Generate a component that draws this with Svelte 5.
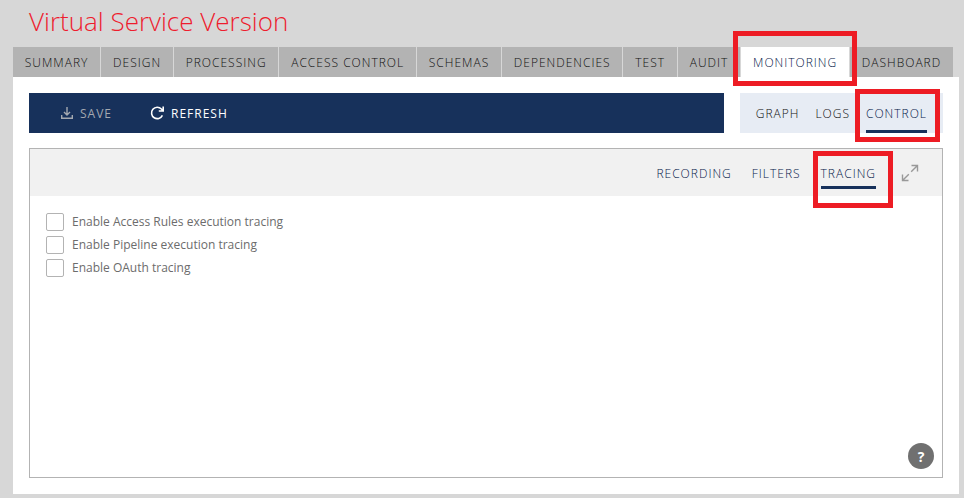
<script lang="ts">
	const tabs = [
		'Summary',
		'Design',
		'Processing',
		'Access Control',
		'Schemas',
		'Dependencies',
		'Test',
		'Audit',
		'Monitoring',
		'Dashboard'
	];
	const views = ['Graph', 'Logs', 'Control'];
	const sections = ['Recording', 'Filters', 'Tracing'];

	let tab = $state('Monitoring');
	let view = $state('Control');
	let section = $state('Tracing');

	let options = $state([
		{ id: 'access-rules', label: 'Enable Access Rules execution tracing', checked: false },
		{ id: 'pipeline', label: 'Enable Pipeline execution tracing', checked: false },
		{ id: 'oauth', label: 'Enable OAuth tracing', checked: false }
	]);
</script>

<div class="page">
	<h1>Virtual Service Version</h1>

	<nav class="tabs">
		{#each tabs as name}
			<button class="tab" class:active={tab === name} onclick={() => (tab = name)}>
				{name}
				{#if name === 'Monitoring'}<span class="callout"></span>{/if}
			</button>
		{/each}
	</nav>

	<main>
		<div class="bars">
			<div class="toolbar">
				<button class="action" disabled>
					<svg width="12" height="12" viewBox="0 0 12 12">
						<path d="M6 0v8M3 5l3 3 3-3M0.7 8v3.3h10.6V8" />
					</svg>
					Save
				</button>
				<button class="action">
					<svg class="refresh" width="14" height="14" viewBox="0 0 14 14">
						<path d="M12.4 9.4A5.7 5.7 0 1 1 11.4 3L13 4.8M13.2 0.4v4.6H8.8" />
					</svg>
					Refresh
				</button>
			</div>
			<nav class="views">
				{#each views as name}
					<button class="link" class:active={view === name} onclick={() => (view = name)}>
						{name}
						{#if name === 'Control'}<span class="callout"></span>{/if}
					</button>
				{/each}
			</nav>
		</div>

		<section class="panel">
			<header>
				{#each sections as name}
					<button class="link" class:active={section === name} onclick={() => (section = name)}>
						{name}
						{#if name === 'Tracing'}<span class="callout"></span>{/if}
					</button>
				{/each}
				<button class="expand" aria-label="Expand">
					<svg width="18" height="18" viewBox="0 0 18 18">
						<path d="M10.2 7.8L16.5 1.5M10.5 1.5h6v6M7.8 10.2L1.5 16.5M1.5 10.5v6h6" />
					</svg>
				</button>
			</header>

			<div class="options">
				{#each options as option (option.id)}
					<div class="option">
						<input type="checkbox" id={option.id} bind:checked={option.checked} />
						<label for={option.id}>{option.label}</label>
					</div>
				{/each}
			</div>

			<button class="help" aria-label="Help">?</button>
		</section>
	</main>
</div>

<style>
	:global(body) {
		background: #d7d7d7;
	}

	.page {
		box-sizing: border-box;
		display: flex;
		flex-direction: column;
		min-height: 100vh;
		padding: 0 5px 4px 13px;
		font-family: 'Segoe UI', 'Open Sans', 'Noto Sans', sans-serif;
		font-size: 12px;
		color: #111;
	}

	h1 {
		margin: 0;
		padding: 1px 16px 6px;
		font-size: 26px;
		font-weight: 300;
		line-height: 40px;
		color: #ee1c2e;
	}

	button {
		padding: 0;
		border: 0;
		background: none;
		font: inherit;
		font-weight: 300;
		letter-spacing: 1px;
		text-transform: uppercase;
		white-space: nowrap;
		color: inherit;
		cursor: pointer;
	}

	.tabs {
		display: flex;
		gap: 1px;
		margin-right: 6px;
	}

	.tab {
		position: relative;
		flex: 1 1 auto;
		height: 30px;
		background: #b3b3b3;
	}

	.tab.active {
		background: #fff;
		color: #06204a;
	}

	main {
		flex: 1;
		display: flex;
		flex-direction: column;
		gap: 15px;
		padding: 16px;
		background: #fff;
	}

	.bars {
		display: flex;
		gap: 16px;
	}

	.toolbar {
		flex: 1;
		display: flex;
		align-items: center;
		gap: 38px;
		height: 40px;
		padding: 0 32px;
		background: #17315b;
		color: #fff;
	}

	.action {
		display: flex;
		align-items: center;
		gap: 7px;
		font-weight: 500;
	}

	.action:disabled {
		font-weight: 400;
		color: #a3a8b0;
		cursor: default;
	}

	svg {
		display: block;
		fill: none;
		stroke: currentColor;
		stroke-width: 1.4;
	}

	.refresh {
		stroke-width: 1.6;
	}

	.views {
		display: flex;
		gap: 16px;
		padding: 0 16px;
		background: #e7ecf4;
	}

	.link {
		position: relative;
		border: solid transparent;
		border-width: 3px 0;
	}

	.link.active {
		border-bottom-color: #17315b;
		color: #06204a;
	}

	.panel {
		position: relative;
		flex: 1;
		border: 1px solid #b3b3b3;
	}

	header {
		display: flex;
		align-items: center;
		justify-content: flex-end;
		gap: 20px;
		height: 47px;
		padding: 0 23px;
		background: #f1f1f1;
		color: #06204a;
	}

	header .link {
		height: 32px;
		padding-top: 2px;
	}

	.expand {
		margin-left: 5px;
		color: #999;
	}

	.options {
		display: flex;
		flex-direction: column;
		gap: 3px;
		padding: 16px;
	}

	.option {
		display: flex;
		align-items: center;
		gap: 8px;
		line-height: 20px;
		color: #6c6c6c;
	}

	input {
		appearance: none;
		width: 18px;
		height: 18px;
		margin: 0;
		border: 1px solid #b3b3b3;
		border-radius: 2px;
		background: #fff;
	}

	input:checked {
		background: #17315b;
	}

	.help {
		position: absolute;
		right: 8px;
		bottom: 8px;
		width: 26px;
		height: 26px;
		border-radius: 50%;
		background: #707070;
		font-size: 14px;
		font-weight: 700;
		letter-spacing: 0;
		color: #fff;
	}

	.callout {
		position: absolute;
		z-index: 1;
		inset: -16px -8px -9px;
		border: 5px solid #ed1c24;
		pointer-events: none;
	}

	.views .callout {
		inset: -7px -13px -12px -11px;
	}

	header .callout {
		inset: -9px -17px -22px -8px;
	}
</style>
